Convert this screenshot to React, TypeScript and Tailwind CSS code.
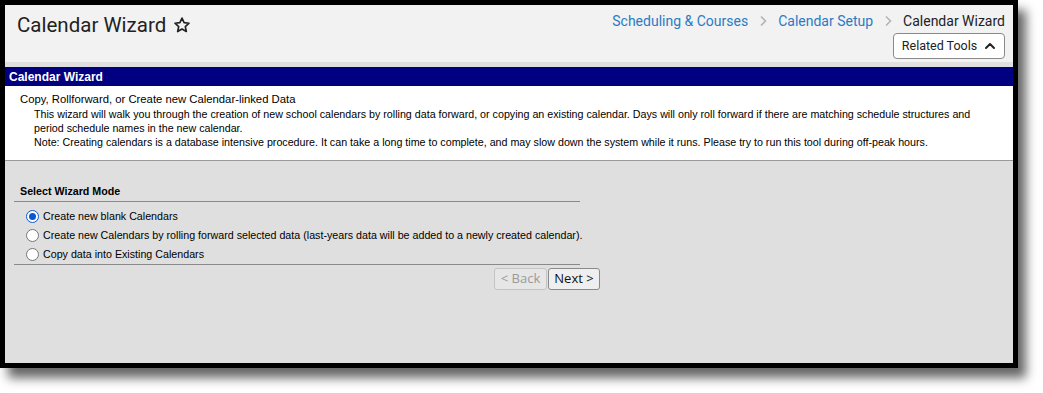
import React from 'react';

const modes = [
  'Create new blank Calendars',
  'Create new Calendars by rolling forward selected data (last-years data will be added to a newly created calendar).',
  'Copy data into Existing Calendars',
];

const Radio = ({ checked }: { checked: boolean }) =>
  checked ? (
    <span className="flex h-[13px] w-[13px] shrink-0 items-center justify-center rounded-full border border-[#0b57d0] bg-white">
      <span className="h-[7px] w-[7px] rounded-full bg-[#0b57d0]" />
    </span>
  ) : (
    <span className="h-[13px] w-[13px] shrink-0 rounded-full border border-[#767676] bg-white" />
  );

const Chevron = () => (
  <svg className="mx-[11px]" width="8" height="12" viewBox="0 0 8 12" fill="none" stroke="#b5b5b5" strokeWidth="1.6">
    <path d="M2 1.5l4.5 4.5L2 10.5" />
  </svg>
);

const App = () => {
  return (
    <div className="h-[393px] w-[1043px] bg-white">
      <div className="h-[368px] w-[1018px] border-[5px] border-black shadow-[8px_10px_10px_rgba(0,0,0,0.6)] flex flex-col bg-[#dfdfdf]">
        <div className="h-[57px] bg-[#f2f2f2] flex justify-between pl-3 pr-2">
          <div className="flex items-start pt-[5px] gap-[7px]">
            <span className="text-[20.5px] leading-[30px] text-[#222] font-['Roboto',sans-serif]">Calendar Wizard</span>
            <svg className="mt-[6px]" width="18" height="18" viewBox="0 0 24 24" fill="none" stroke="#222" strokeWidth="2.2" strokeLinejoin="round">
              <path d="M12 2.8l2.8 6.1 6.6.7-5 4.5 1.4 6.6L12 17.3l-5.8 3.4 1.4-6.6-5-4.5 6.6-.7z" />
            </svg>
          </div>
          <div className="flex flex-col items-end font-['Roboto',sans-serif]">
            <div className="flex items-center h-[20px] mt-[6px] text-[14px]">
              <span className="text-[#2a7bc4]">Scheduling &amp; Courses</span>
              <Chevron />
              <span className="text-[#2a7bc4]">Calendar Setup</span>
              <Chevron />
              <span className="text-[#222]">Calendar Wizard</span>
            </div>
            <button className="mt-[2px] h-[26px] w-[112px] rounded-[4px] border border-[#8a8a8a] bg-white flex items-center justify-center gap-[7px] text-[12.5px] text-[#222]">
              Related Tools
              <svg width="12" height="12" viewBox="0 0 24 24" fill="none" stroke="#222" strokeWidth="4" strokeLinecap="round" strokeLinejoin="round">
                <path d="M4 16l8-8 8 8" />
              </svg>
            </button>
          </div>
        </div>
        <div className="h-[5px] bg-[#e0e0e0]" />
        <div className="h-[19px] bg-[#000080] px-[4px] flex items-center text-[12px] font-bold text-white font-['Liberation_Sans',Arial,sans-serif]">
          Calendar Wizard
        </div>
        <div className="h-[75px] bg-white border-b border-[#9a9a9a] pl-[15px] pt-[6px] text-black font-['Liberation_Sans',Arial,sans-serif]">
          <div className="text-[11.3px] leading-[14px]">Copy, Rollforward, or Create new Calendar-linked Data</div>
          <div className="pl-[14px] pr-[30px] pt-[1px] text-[10.7px] leading-[14px]">
            This wizard will walk you through the creation of new school calendars by rolling data forward, or copying an existing calendar. Days will only roll forward if there are matching schedule structures and period schedule names in the new calendar.
            <br />
            Note: Creating calendars is a database intensive procedure. It can take a long time to complete, and may slow down the system while it runs. Please try to run this tool during off-peak hours.
          </div>
        </div>
        <div className="pl-[9px] pt-[24px] font-['Liberation_Sans',Arial,sans-serif] text-[10.7px] text-black">
          <div className="w-[566px]">
            <div className="border-b border-[#8a8a8a] pl-[6px] pb-[3px] leading-[13px] font-bold">Select Wizard Mode</div>
            <div className="flex flex-col gap-[6px] pt-[8px] pb-[3px] pl-[12px] border-b border-[#8a8a8a]">
              {modes.map((m, i) => (
                <label key={m} className="flex items-center gap-[4px] h-[13px] whitespace-nowrap">
                  <Radio checked={i === 0} />
                  <span>{m}</span>
                </label>
              ))}
            </div>
          </div>
          <div className="w-[586px] flex justify-end gap-[1px] pt-[3px] font-['Open_Sans',sans-serif] text-[13px]">
            <button className="h-[22px] w-[53px] rounded-[3px] border border-[#c4c4c4] bg-[#e6e6e6] text-[#9a9a9a]">&lt; Back</button>
            <button className="h-[22px] w-[52px] rounded-[3px] border border-[#8a8a8a] bg-[#efefef] text-[#111]">Next &gt;</button>
          </div>
        </div>
      </div>
    </div>
  );
};

export default App;
